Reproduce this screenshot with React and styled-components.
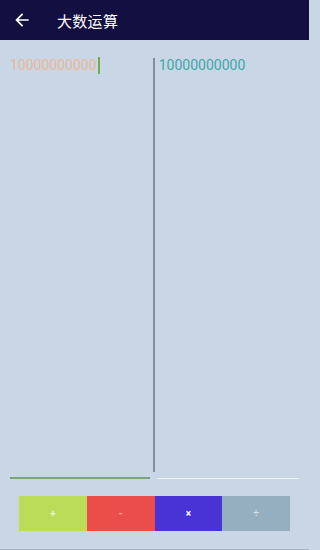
import styled, { createGlobalStyle } from "styled-components";

const GlobalStyle = createGlobalStyle`
  html, body {
    margin: 0;
    padding: 0;
    background: #c8d6e5;
    font-family: Roboto, "Noto Sans CJK SC", sans-serif;
  }
`;

const ops = [
  { label: "+", bg: "#badc58", fg: "rgba(255,255,255,0.75)" },
  { label: "-", bg: "#eb4d4b", fg: "rgba(255,255,255,0.6)" },
  { label: "×", bg: "#4834d4", fg: "#ffffff" },
  { label: "÷", bg: "#95afc0", fg: "rgba(255,255,255,0.6)" },
];

const App = () => {
  return (
    <Page>
      <GlobalStyle />
      <Header>
        <BackButton>
          <svg width="20" height="20" viewBox="0 0 24 24" fill="#ffffff">
            <path d="M20 11H7.83l5.59-5.59L12 4l-8 8 8 8 1.41-1.41L7.83 13H20v-2z" />
          </svg>
        </BackButton>
        <Title>大数运算</Title>
      </Header>
      <Panes>
        <Pane $line="2px solid #79a57c" $pad="0">
          <Value $color="#eab99a">
            10000000000
            <Caret />
          </Value>
        </Pane>
        <Divider />
        <Pane $line="1px solid #edf2f7" $pad="2px">
          <Value $color="#40a8a8">10000000000</Value>
        </Pane>
      </Panes>
      <Keypad>
        {ops.map((op) => (
          <OpButton key={op.label} $bg={op.bg} $fg={op.fg}>
            {op.label}
          </OpButton>
        ))}
      </Keypad>
    </Page>
  );
};

export default App;

const Page = styled.div`
  width: 309px;
  height: 550px;
  display: flex;
  flex-direction: column;
  background: #c8d6e5;
  border-bottom: 1px solid #a4b2c2;
  box-sizing: border-box;
`;

const Header = styled.div`
  height: 40px;
  background: #130f40;
  display: flex;
  align-items: center;
  flex-shrink: 0;
`;

const BackButton = styled.div`
  width: 20px;
  height: 20px;
  margin-left: 12px;
  display: flex;
`;

const Title = styled.div`
  margin-left: 25px;
  color: #ffffff;
  font-size: 15px;
  font-family: "Noto Sans CJK SC", sans-serif;
  letter-spacing: 0.3px;
`;

const Panes = styled.div`
  display: flex;
  margin-top: 16px;
  height: 423px;
  padding: 0 10px;
`;

const Pane = styled.div`
  flex: 1;
  border-bottom: ${(p) => p.$line};
  padding: 1px 0 0 ${(p) => p.$pad};
`;

const Divider = styled.div`
  width: 1.5px;
  background: #7f8fa0;
  margin: 2px 2px 7px 3px;
`;

const Value = styled.div`
  display: flex;
  align-items: center;
  font-size: 14px;
  line-height: 17px;
  color: ${(p) => p.$color};
`;

const Caret = styled.span`
  display: inline-block;
  width: 2px;
  height: 17px;
  margin-left: 1px;
  background: #6ab04c;
`;

const Keypad = styled.div`
  display: grid;
  grid-template-columns: repeat(4, 1fr);
  margin: 17px 19px 0;
  height: 35px;
`;

const OpButton = styled.div`
  background: ${(p) => p.$bg};
  color: ${(p) => p.$fg};
  display: flex;
  align-items: center;
  justify-content: center;
  font-size: 10px;
  font-weight: bold;
`;
